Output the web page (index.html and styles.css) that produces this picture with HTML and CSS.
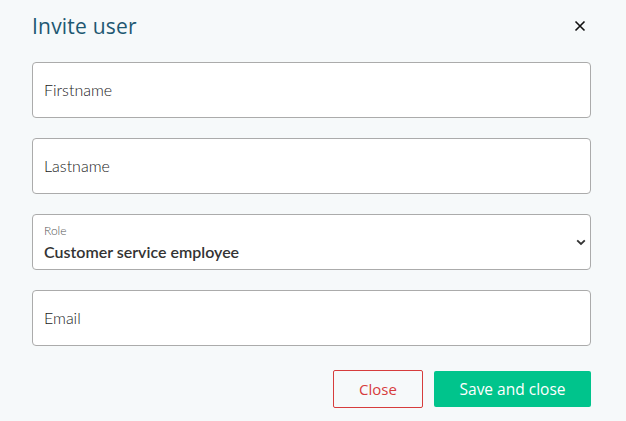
FILE: index.html
```html
<!DOCTYPE html>
<html lang="en">
<head>
<meta charset="utf-8">
<title>Invite user</title>
<link rel="stylesheet" href="styles.css">
</head>
<body>
<div class="dialog">
  <div class="header">
    <h1 class="title">Invite user</h1>
    <button class="close-x" aria-label="Close">
      <svg width="12" height="12" viewBox="0 0 12 12"><path d="M1.5 1.5 L10.5 10.5 M10.5 1.5 L1.5 10.5" stroke="#111" stroke-width="1.6" fill="none"/></svg>
    </button>
  </div>
  <form class="form">
    <div class="field"><span class="placeholder">Firstname</span></div>
    <div class="field"><span class="placeholder">Lastname</span></div>
    <div class="field select">
      <div class="select-text">
        <span class="label">Role</span>
        <span class="value">Customer service employee</span>
      </div>
      <svg class="chevron" width="10" height="7" viewBox="0 0 10 7"><path d="M1.2 1.3 L5 5 L8.8 1.3" stroke="#333" stroke-width="1.8" fill="none"/></svg>
    </div>
    <div class="field"><span class="placeholder">Email</span></div>
  </form>
  <div class="actions">
    <button class="btn btn-close" type="button">Close</button>
    <button class="btn btn-save" type="button">Save and close</button>
  </div>
</div>
</body>
</html>
```

FILE: styles.css
```css
html, body {
  margin: 0;
  padding: 0;
  background: #f6f9fa;
}
body {
  font-family: Lato, "Open Sans", sans-serif;
}
.dialog {
  width: 626px;
  height: 421px;
  box-sizing: border-box;
  padding: 12px 35px 0 32px;
}
.header {
  display: flex;
  align-items: center;
  justify-content: space-between;
  height: 28px;
}
.title {
  margin: 0;
  font-family: "Open Sans", sans-serif;
  font-weight: 400;
  font-size: 21px;
  color: #1e5872;
  letter-spacing: 0.2px;
}
.close-x {
  border: 0;
  background: none;
  padding: 0;
  margin-right: 5px;
  width: 12px;
  height: 12px;
  display: flex;
}
.form {
  margin-top: 22px;
  display: flex;
  flex-direction: column;
  gap: 20px;
}
.field {
  height: 56px;
  box-sizing: border-box;
  background: #fff;
  border: 1px solid #ababab;
  border-radius: 4px;
  display: flex;
  align-items: center;
  padding: 0 11px;
}
.placeholder {
  font-size: 16px;
  font-weight: 300;
  color: #1a1a1a;
  margin-top: -1px;
}
.select {
  justify-content: space-between;
  padding-right: 4px;
}
.select-text {
  display: flex;
  flex-direction: column;
  padding-top: 2px;
}
.label {
  font-size: 12px;
  font-weight: 300;
  color: #555;
  line-height: 14px;
}
.value {
  font-size: 16px;
  font-weight: 600;
  color: #333;
  line-height: 22px;
  margin-top: 3px;
}
.chevron {
  margin-top: 1px;
}
.actions {
  margin-top: 24px;
  display: flex;
  justify-content: flex-end;
  align-items: center;
  gap: 11px;
}
.btn {
  font-family: "Open Sans", sans-serif;
  font-size: 15px;
  border-radius: 2px;
  cursor: pointer;
}
.btn-close {
  width: 90px;
  height: 38px;
  background: transparent;
  border: 1px solid #d63c3c;
  color: #d63c3c;
}
.btn-save {
  width: 157px;
  height: 36px;
  background: #00c48c;
  border: 0;
  color: #fff;
  font-size: 15.5px;
}
```
